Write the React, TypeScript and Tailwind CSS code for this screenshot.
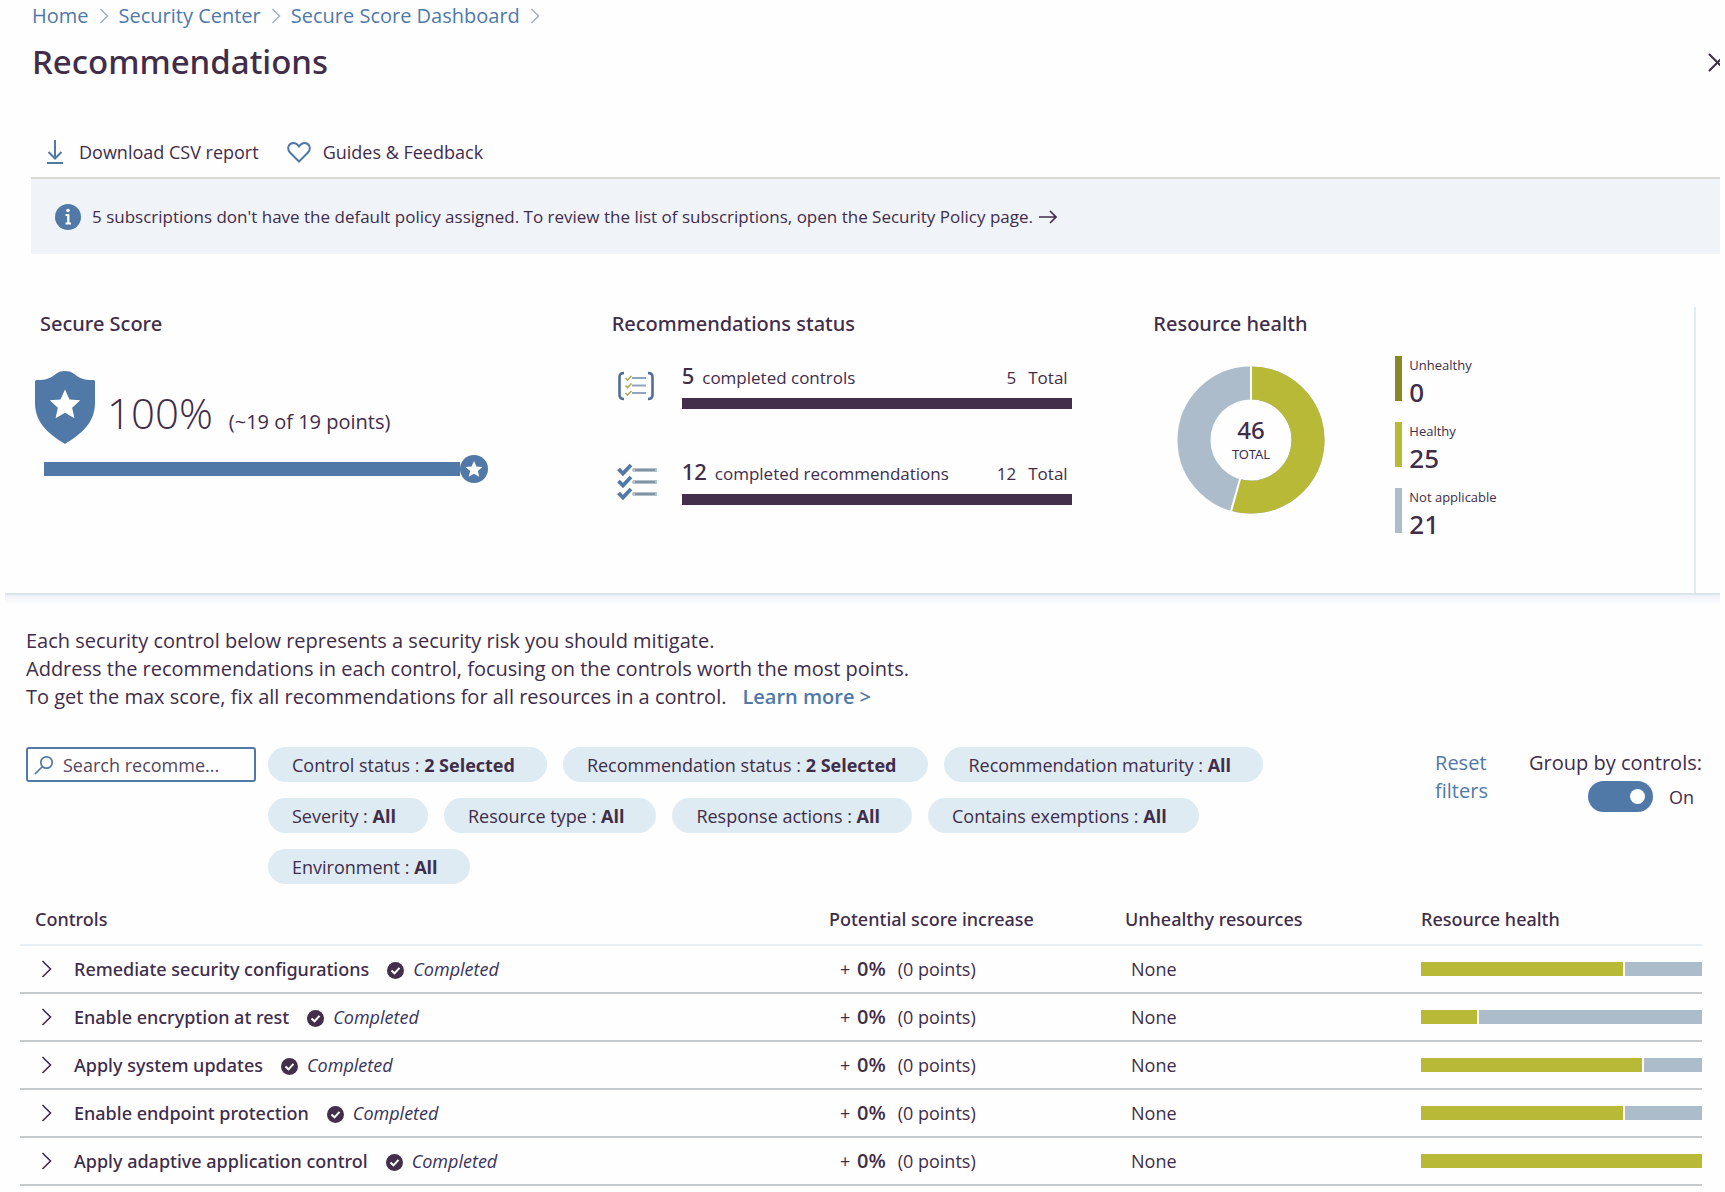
import { useState } from "react";

const crumbs = ["Home", "Security Center", "Secure Score Dashboard"];

const filters = [
  { name: "Control status", value: "2 Selected" },
  { name: "Recommendation status", value: "2 Selected" },
  { name: "Recommendation maturity", value: "All" },
  { name: "Severity", value: "All" },
  { name: "Resource type", value: "All" },
  { name: "Response actions", value: "All" },
  { name: "Contains exemptions", value: "All" },
  { name: "Environment", value: "All" },
];

const legend = [
  { label: "Unhealthy", count: 0, color: "bg-[#868726]" },
  { label: "Healthy", count: 25, color: "bg-[#b8b937]" },
  { label: "Not applicable", count: 21, color: "bg-[#acbccb]" },
];

const controls = [
  { name: "Remediate security configurations", healthy: 72 },
  { name: "Enable encryption at rest", healthy: 20 },
  { name: "Apply system updates", healthy: 78.5 },
  { name: "Enable endpoint protection", healthy: 72 },
  { name: "Apply adaptive application control", healthy: 100 },
];

const STAR = "M0 -10 L2.9 -3.6 L9.8 -3 L4.6 1.7 L6.1 8.5 L0 5 L-6.1 8.5 L-4.6 1.7 L-9.8 -3 L-2.9 -3.6 Z";

function Chevron({ className }: { className: string }) {
  return (
    <svg aria-hidden viewBox="0 0 10 18" className={`shrink-0 ${className}`} fill="none" stroke="currentColor">
      <path d="M1 1 L9 9 L1 17" strokeWidth="1.6" />
    </svg>
  );
}

function Heading({ children }: { children: React.ReactNode }) {
  return <h2 className="font-['Noto_Sans','Open_Sans',sans-serif] text-xl font-medium leading-7">{children}</h2>;
}

function ShieldIcon() {
  return (
    <svg aria-hidden viewBox="0 0 60 73" className="h-[73px] w-[60px] shrink-0">
      <path
        d="M1.5 9 C12 9 16 7 20 3.5 C23 1 26 0 30 0 C34 0 37 1 40 3.5 C44 7 48 9 58.5 9 Q60 9 60 10.5 V32 C60 52 46 63 30 73 C14 63 0 52 0 32 V10.5 Q0 9 1.5 9 Z"
        fill="#5079a8"
      />
      <path d={STAR} transform="translate(30 34) scale(1.55)" fill="#fff" />
    </svg>
  );
}

function ControlsIcon() {
  return (
    <svg aria-hidden viewBox="0 0 38 30" className="h-[30px] w-[38px]" fill="none">
      <path d="M7 2 Q2.500 2 2.500 6 V24 Q2.500 28 7 28 M31 2 Q35.500 2 35.500 6 V24 Q35.500 28 31 28" stroke="#4f6f98" strokeWidth="2.6" />
      {[7, 14.5, 22].map((y) => (
        <g key={y}>
          <path d={`M8.5 ${y} l2 2 l4 -4`} stroke="#b5a860" strokeWidth="1.6" />
          <path d={`M15 ${y} H29`} stroke="#8fa5bd" strokeWidth="2" />
        </g>
      ))}
    </svg>
  );
}

function ChecklistIcon() {
  return (
    <svg aria-hidden viewBox="0 0 40 38" className="h-[38px] w-10" fill="none">
      {[7, 19, 31].map((y) => (
        <g key={y}>
          <path d={`M17 ${y} H39`} stroke="#b4c1cc" strokeWidth="4" strokeLinecap="round" />
          <path d={`M18 ${y} H38`} stroke="#74889a" strokeWidth="1.6" />
          <path d={`M1.5 ${y - 1} l4.500 4.500 l8 -8.500`} stroke="#5079a8" strokeWidth="3.8" />
        </g>
      ))}
    </svg>
  );
}

function CheckBadge() {
  return (
    <svg aria-hidden viewBox="0 0 17 17" className="h-[17px] w-[17px]">
      <circle cx="8.5" cy="8.5" r="8.5" fill="#432f4b" />
      <path d="M4.5 8.5 L7.5 11.3 L12.5 5.8" fill="none" stroke="#fff" strokeWidth="2" />
    </svg>
  );
}

/** Share of healthy resources, drawn clockwise from the top. */
function Donut({ healthy, total }: { healthy: number; total: number }) {
  const angle = (healthy / total) * 2 * Math.PI - Math.PI / 2;
  const at = (r: number, a: number) => `${74 + r * Math.cos(a)} ${74 + r * Math.sin(a)}`;
  const top = -Math.PI / 2;
  const arc = `M${at(57, top)} A57 57 0 1 1 ${at(57, angle)}`;
  return (
    <svg viewBox="0 0 148 148" className="h-[148px] w-[148px] shrink-0 font-['Noto_Sans','Open_Sans',sans-serif]" fill="none">
      <circle cx="74" cy="74" r="57" stroke="#acbccb" strokeWidth="33" />
      <path d={arc} stroke="#b8b937" strokeWidth="33" />
      <path d={`M${at(39, top)} L${at(75, top)} M${at(39, angle)} L${at(75, angle)}`} stroke="#fff" strokeWidth="2" />
      <text x="74" y="73" textAnchor="middle" fontSize="24" fontWeight="500" fill="#3f2d4a">
        {total}
      </text>
      <text x="74" y="93" textAnchor="middle" fontSize="13" fill="#3f2d4a">
        TOTAL
      </text>
    </svg>
  );
}

function StatusRow({ icon, count, label }: { icon: React.ReactNode; count: number; label: string }) {
  return (
    <div className="flex items-center">
      <div className="flex w-[70px] shrink-0 pl-[5px]">{icon}</div>
      <div className="w-[390px]">
        <div className="flex h-6 items-baseline text-[17px] leading-6">
          <span className="font-['Noto_Sans','Open_Sans',sans-serif] text-[22px] font-medium leading-6">{count}</span>
          <span className="ml-2">{label}</span>
          <span className="ml-auto">{count}</span>
          <span className="ml-3 pr-1">Total</span>
        </div>
        <div className="mt-[11px] h-[11px] bg-[#432f4b]" />
      </div>
    </div>
  );
}

function Overview() {
  return (
    <section className="mr-[29px] grid grid-cols-[577fr_542fr_543fr] pl-[35px] pt-[53px]">
      <div className="pt-[3px]">
        <div className="pl-[5px]">
          <Heading>Secure Score</Heading>
        </div>
        <div className="mt-[33px] flex items-end">
          <ShieldIcon />
          <div className="ml-3 flex items-baseline gap-4 pb-[10px]">
            <span className="text-[42px] font-light leading-none">100%</span>
            <span className="text-xl leading-none">(~19 of 19 points)</span>
          </div>
        </div>
        <div className="mt-[11px] flex items-center pl-[9px]">
          <div className="h-[14px] w-[416px] bg-[#5079a8]" />
          <svg aria-hidden viewBox="0 0 28 28" className="h-7 w-7">
            <circle cx="14" cy="14" r="14" fill="#5079a8" />
            <path d={STAR} transform="translate(14 14.5) scale(0.85)" fill="#fff" />
          </svg>
        </div>
      </div>

      <div className="pt-[3px]">
        <Heading>Recommendations status</Heading>
        <div className="mt-[25px] flex flex-col gap-[50px]">
          <StatusRow icon={<ControlsIcon />} count={5} label="completed controls" />
          <StatusRow icon={<ChecklistIcon />} count={12} label="completed recommendations" />
        </div>
      </div>

      <div className="border-r-2 border-[#e2ebf3] pb-[51px] pt-[3px]">
        <Heading>Resource health</Heading>
        <div className="mt-[18px] flex pl-6">
          <div className="pt-[10px]">
            <Donut healthy={25} total={46} />
          </div>
          <ul className="ml-[70px] flex flex-col gap-3">
            {legend.map((item) => (
              <li key={item.label} className="flex gap-[7px]">
                <span className={`h-[45px] w-[7px] ${item.color}`} />
                <div>
                  <div className="text-[13px] leading-[18px]">{item.label}</div>
                  <div className="font-['Noto_Sans','Open_Sans',sans-serif] text-[26px] font-medium leading-9">
                    {item.count}
                  </div>
                </div>
              </li>
            ))}
          </ul>
        </div>
      </div>
    </section>
  );
}

function FilterBar() {
  const [grouped, setGrouped] = useState(true);
  return (
    <div className="mt-9 flex items-start pl-[26px] pr-[23px]">
      <label className="flex h-[35px] w-[230px] shrink-0 items-center rounded-[3px] border-2 border-[#5079a8] pl-[6px]">
        <svg aria-hidden viewBox="0 0 20 20" className="h-5 w-5 shrink-0" fill="none" stroke="#5079a8" strokeWidth="1.7">
          <circle cx="12.5" cy="7.5" r="5.7" />
          <path d="M8.5 11.5 L1 19" />
        </svg>
        <input
          type="text"
          aria-label="Search recommendations"
          placeholder="Search recomme..."
          className="ml-[9px] w-full min-w-0 bg-transparent text-lg leading-7 outline-none placeholder:text-[#55475f]"
        />
      </label>
      <div className="ml-3 mr-9 flex flex-1 flex-wrap gap-x-4 gap-y-4">
        {filters.map((f) => (
          <button key={f.name} className="h-[35px] rounded-full bg-[#deebf2] pl-6 pr-8 text-lg leading-7">
            {f.name} : <span className="font-bold">{f.value}</span>
          </button>
        ))}
      </div>
      <button className="w-[54px] pt-0.5 text-left text-xl leading-7 text-[#5079a8]">Reset filters</button>
      <div className="ml-10 flex shrink-0 flex-col items-end pt-0.5">
        <label htmlFor="group" className="text-xl leading-7">
          Group by controls:
        </label>
        <div className="mt-1 flex items-center gap-4 pr-2">
          <label className="flex cursor-pointer">
            <input
              id="group"
              type="checkbox"
              role="switch"
              checked={grouped}
              onChange={(e) => setGrouped(e.target.checked)}
              className="peer sr-only"
            />
            <span className="flex h-[31px] w-[65px] items-center rounded-full bg-[#8a8f98] px-2 peer-checked:justify-end peer-checked:bg-[#5079a8]">
              <span className="h-[15px] w-[15px] rounded-full bg-white" />
            </span>
          </label>
          <span className="text-lg leading-7">{grouped ? "On" : "Off"}</span>
        </div>
      </div>
    </div>
  );
}

function ControlsTable() {
  return (
    <div className="mt-[10px] pl-5 pr-[23px]">
      <table className="w-full table-fixed border-collapse text-left text-lg leading-7">
        <colgroup>
          <col />
          <col className="w-[296px]" />
          <col className="w-[296px]" />
          <col className="w-[281px]" />
        </colgroup>
        <thead className="font-['Noto_Sans','Open_Sans',sans-serif]">
          <tr className="h-[51px] border-b-2 border-[#e8eef4]">
            <th className="pl-[15px] font-medium">Controls</th>
            <th className="font-medium">Potential score increase</th>
            <th className="font-medium">Unhealthy resources</th>
            <th className="font-medium">Resource health</th>
          </tr>
        </thead>
        <tbody>
          {controls.map((c) => (
            <tr key={c.name} className="h-12 border-b-2 border-[#c6cacd]">
              <td>
                <div className="flex items-center pl-[21px]">
                  <button aria-label={`Expand ${c.name}`} className="flex">
                    <Chevron className="h-[18px] w-[11px]" />
                  </button>
                  <span className="ml-[22px] font-['Noto_Sans','Open_Sans',sans-serif] font-medium">{c.name}</span>
                  <span className="ml-[18px] pt-0.5">
                    <CheckBadge />
                  </span>
                  <span className="ml-[9px] italic text-[#38325a]">Completed</span>
                </div>
              </td>
              <td className="pl-[11px]">
                + <span className="ml-0.5 text-xl font-semibold">0%</span>
                <span className="ml-3">(0 points)</span>
              </td>
              <td className="pl-[6px]">None</td>
              <td>
                <div className="flex h-[14px] gap-0.5">
                  <div className="bg-[#b8b937]" style={{ width: `${c.healthy}%` }} />
                  {c.healthy < 100 && <div className="flex-1 bg-[#acbccb]" />}
                </div>
              </td>
            </tr>
          ))}
        </tbody>
      </table>
    </div>
  );
}

export default function App() {
  return (
    <main className="min-h-screen overflow-hidden bg-[#fefefe] font-['Open_Sans','Noto_Sans',sans-serif] text-[#3f2d4a]">
      <header className="pl-8 pr-[5px]">
        <nav className="flex items-center gap-[10px] text-xl leading-8 text-[#5079a8]">
          {crumbs.map((c) => (
            <span key={c} className="flex items-center gap-[10px]">
              <a href="#">{c}</a>
              <Chevron className="h-4 w-[10px] text-[#9fb0c2]" />
            </span>
          ))}
        </nav>
        <div className="mt-[6px] flex items-center justify-between">
          <h1 className="font-['Noto_Sans','Open_Sans',sans-serif] text-[33px] font-medium leading-[48px]">
            Recommendations
          </h1>
          <button aria-label="Close" className="w-3 overflow-hidden">
            <svg viewBox="0 0 19 19" className="h-[19px] w-[19px] max-w-none" fill="none" stroke="currentColor" strokeWidth="2">
              <path d="M1 1 L18 18 M18 1 L1 18" />
            </svg>
          </button>
        </div>
      </header>

      <div className="ml-[31px] mr-[5px] mt-[52px] flex gap-7 border-b-2 border-[#d9d9d2] pb-[11px] pl-4 text-lg leading-7">
        <button className="flex items-center gap-4">
          <svg aria-hidden viewBox="0 0 16 24" className="h-6 w-4" fill="none" stroke="#5079a8" strokeWidth="2">
            <path d="M8 0 V18 M1.5 12 L8 18.5 L14.5 12 M0 23 H16" />
          </svg>
          Download CSV report
        </button>
        <button className="flex items-center gap-3">
          <svg aria-hidden viewBox="0 0 24 21" className="h-[21px] w-6" fill="none" stroke="#5079a8" strokeWidth="2">
            <path d="M12 19.5 L3 10.5 C-0.5 6.5 1.5 1 6.5 1 C9.5 1 11 3 12 4.5 C13 3 14.5 1 17.5 1 C22.5 1 24.5 6.5 21 10.5 Z" />
          </svg>
          Guides &amp; Feedback
        </button>
      </div>

      <div className="ml-[31px] mr-[5px] flex h-[75px] items-center bg-[#f0f3f8] pl-6">
        <svg aria-hidden viewBox="0 0 26 26" className="h-[26px] w-[26px] shrink-0">
          <circle cx="13" cy="13" r="13" fill="#5079a8" />
          <circle cx="13" cy="6.5" r="1.8" fill="#fff" />
          <path d="M10.5 11 H13.3 V19.5 M10.5 19.5 H16" fill="none" stroke="#fff" strokeWidth="2.2" />
        </svg>
        <a href="#" className="ml-[11px] flex items-center gap-[6px] text-[17px] leading-6">
          5 subscriptions don't have the default policy assigned. To review the list of subscriptions, open the Security
          Policy page.
          <svg aria-hidden viewBox="0 0 18 14" className="h-[14px] w-[18px]" fill="none" stroke="currentColor" strokeWidth="1.6">
            <path d="M0 7 H17 M11 1 L17 7 L11 13" />
          </svg>
        </a>
      </div>

      <Overview />
      <div className="ml-[5px] mr-[5px] h-3 border-t-2 border-[#dde5ec] bg-linear-to-b from-[#eef1f8] to-[#fefefe]" />

      <p className="mt-[22px] pl-[26px] text-xl leading-7">
        Each security control below represents a security risk you should mitigate.
        <br />
        Address the recommendations in each control, focusing on the controls worth the most points.
        <br />
        To get the max score, fix all recommendations for all resources in a control.
        <a href="#" className="ml-4 font-semibold text-[#5079a8]">
          Learn more &gt;
        </a>
      </p>

      <FilterBar />
      <ControlsTable />
    </main>
  );
}
